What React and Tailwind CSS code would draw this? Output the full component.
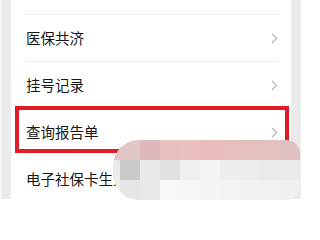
import React from 'react';

const rows = ['医保共济', '挂号记录', '查询报告单', '电子社保卡生活'];

// mosaic smudge over the lower right (cells 20px, first column partial)
const widths = [7, 20, 20, 20, 20, 20, 20, 20, 20, 20];
const mosaic = [
  ['#e2c6c8', '#e2c6c8', '#dfb8bd', '#e8c0c0', '#eac0c0', '#e9bcbc', '#e8bebe', '#e6bfbf', '#e5c0c0', '#e0c0c2'],
  ['#ebebeb', '#c9c9c9', '#e9e9e9', '#e2e2e2', '#efefef', '#f4f4f4', '#eeeeee', '#ededed', '#eaeaea', '#ebebeb'],
  ['#eeeeee', '#e6e6e6', '#e8e8e8', '#f8f8f8', '#f6f6f6', '#f4f4f4', '#f3f3f3', '#f2f2f2', '#f1f1f1', '#f0f0f0'],
];

function Chevron() {
  return (
    <svg width="7" height="11" viewBox="0 0 7 11" className="shrink-0">
      <polyline points="1,1 5.5,5.5 1,10" fill="none" stroke="#b3b3b3" strokeWidth="1.1" />
    </svg>
  );
}

export default function App() {
  return (
    <div className="w-[301px] h-[209px] bg-white overflow-hidden relative" style={{ fontFamily: '"Noto Sans CJK SC", "Noto Sans", sans-serif' }}>
      <div className="flex h-[199px] bg-[#ebebeb] border-l-2 border-[#f6f6f6]">
        <div className="ml-[9px] w-[280px] bg-white flex flex-col">
          <div className="h-[14px] shrink-0" />
          {rows.map((r) => (
            <div key={r} className="ml-[14px] w-[254px] h-[47px] shrink-0 border-t border-[#efefef] flex items-center justify-between pl-px pr-px">
              <span className="text-[14.5px] leading-none text-[#161616]">{r}</span>
              <Chevron />
            </div>
          ))}
        </div>
      </div>

      {/* red annotation box */}
      <div className="absolute left-[15px] top-[106px] w-[274px] h-[47px] border-4 border-[#e01b26]" />

      {/* mosaic smudge */}
      <div className="absolute left-[113px] top-[140px] w-[187px] h-[60px] rounded-l-[26px] rounded-r-[14px] overflow-hidden flex flex-col">
        {mosaic.map((row, i) => (
          <div key={i} className="flex h-[20px]">
            {row.map((c, j) => (
              <div key={j} className="h-full shrink-0" style={{ width: widths[j], backgroundColor: c }} />
            ))}
          </div>
        ))}
      </div>
    </div>
  );
}
